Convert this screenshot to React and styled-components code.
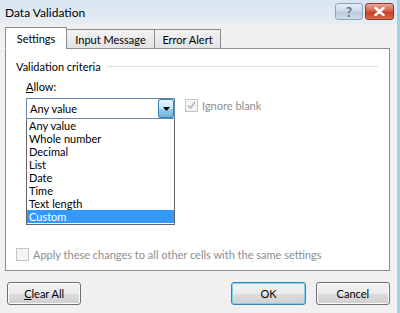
import React from 'react';
import styled, { createGlobalStyle } from 'styled-components';

const Global = createGlobalStyle`
  html, body { margin:0; padding:0; background:#f0f0f0; }
  body { font-family:Lato, "Liberation Sans", sans-serif; font-size:11px; color:#000; }
`;

const Window = styled.div`
  width:400px; height:313px; box-sizing:border-box; overflow:hidden;
  display:flex; flex-direction:column;
  background:#f0f0f0;
  border-right:3px solid #9fd3ea;
`;

const TitleBar = styled.div`
  height:24px; flex:none;
  display:flex; align-items:center; justify-content:space-between;
  padding:0 3px 0 5px;
  background:linear-gradient(#d9e5f1, #e6edf4);
  .title { font-size:12px; }
`;

const Caps = styled.div`
  display:flex; gap:2px; align-self:flex-start; margin-top:3px;
`;

const CapBtn = styled.div`
  width:${p => p.w}px; height:17px; box-sizing:border-box;
  border:1px solid ${p => p.red ? '#8a3a2c' : '#8fa2b8'};
  border-radius:3px;
  background:${p => p.red
    ? 'linear-gradient(#e9a99c, #d0593f 50%, #c3381d 51%, #d86a4b)'
    : 'linear-gradient(#e6eef6, #c9d7e6 50%, #b8c9dc 51%, #cfdceb)'};
  display:flex; align-items:center; justify-content:center;
  color:${p => p.red ? '#fff' : '#5b6f86'};
  font-weight:bold; font-size:13px;
`;

const Client = styled.div`
  flex:1; display:flex; flex-direction:column;
  padding:3px 7px 0 5px;
`;

const Tabs = styled.div`
  display:flex; align-items:flex-end; height:22px; position:relative; z-index:1;
`;

const Tab = styled.div`
  width:${p => p.w}px; height:${p => p.active ? 22 : 20}px; box-sizing:border-box;
  display:flex; align-items:center; justify-content:center;
  border:1px solid #898c95;
  border-bottom:${p => p.active ? '1px solid #fff' : '1px solid #898c95'};
  margin-left:${p => p.first ? 0 : -1}px;
  background:${p => p.active ? '#fff' : 'linear-gradient(#f2f2f2, #e3e3e3)'};
  padding-top:${p => p.active ? 0 : 1}px;
`;

const Panel = styled.div`
  height:223px; box-sizing:border-box; margin-top:-1px;
  border:1px solid #898c95; background:#fff;
  display:flex; flex-direction:column;
  padding:10px 10px 9px 10px;
`;

const GroupHead = styled.div`
  display:flex; align-items:center; gap:6px; line-height:15px;
  &::after { content:''; flex:1; height:1px; background:#d5dfe5; margin-right:1px; }
`;

const Group = styled.div`
  padding:5px 0 0 10px;
  display:flex; flex-direction:column;
`;

const Label = styled.div`
  line-height:16px;
  u { text-decoration:underline; }
`;

const Row = styled.div`
  display:flex; align-items:flex-start; margin-top:3px;
`;

const ComboWrap = styled.div`
  position:relative; width:149px;
`;

const Combo = styled.div`
  height:21px; box-sizing:border-box;
  border:1px solid #6a86a8;
  display:flex; align-items:center; padding-left:3px;
  background:#fff;
`;

const DropBtn = styled.div`
  position:absolute; right:1px; top:1px; width:16px; height:19px; box-sizing:border-box;
  border:1px solid #3c7fb1; border-radius:2px;
  background:linear-gradient(#e5f4fc, #c4e5f6 50%, #98d1ef 51%, #6cb4e0);
  display:flex; align-items:center; justify-content:center;
`;

const List = styled.div`
  position:absolute; left:0; top:21px; width:149px; box-sizing:border-box;
  border:1px solid #646464; border-top:none; background:#fff;
  padding-bottom:1px;
`;

const Item = styled.div`
  height:13px; line-height:13px; padding-left:2px;
  background:${p => p.sel ? '#3399ff' : 'transparent'};
  color:${p => p.sel ? '#fff' : '#000'};
`;

const Check = styled.div`
  display:flex; align-items:center; gap:4px; color:#8d8d8d;
  margin-left:${p => p.ml || 0}px; margin-top:${p => p.mt || 0}px;
  &.bottom { margin-top:auto; }
`;

const Box = styled.div`
  width:13px; height:13px; box-sizing:border-box;
  border:1px solid #c5c5c5; background:#f4f4f4;
  display:flex; align-items:center; justify-content:center;
`;

const Footer = styled.div`
  display:flex; align-items:center; padding:11px 0 0 2px;
`;

const Button = styled.div`
  width:75px; height:23px; box-sizing:border-box;
  border:1px solid ${p => p.def ? '#3c7fb1' : '#707070'};
  border-radius:3px;
  box-shadow:${p => p.def ? 'inset 0 0 0 1px #7ad2f5' : 'inset 0 0 0 1px #fcfcfc'};
  background:linear-gradient(#f2f2f2, #ebebeb 50%, #dddddd 51%, #cfcfcf);
  display:flex; align-items:center; justify-content:center;
  margin-left:${p => p.ml || 0}px;
  u { text-decoration:underline; }
`;

const items = ['Any value', 'Whole number', 'Decimal', 'List', 'Date', 'Time', 'Text length', 'Custom'];

export default function App() {
  return (
    <Window>
      <Global />
      <TitleBar>
        <span className="title">Data Validation</span>
        <Caps>
          <CapBtn w={28}>?</CapBtn>
          <CapBtn w={29} red>
            <svg width="11" height="9" viewBox="0 0 11 9">
              <path d="M1.5 1 L9.5 8 M9.5 1 L1.5 8" stroke="#fff" strokeWidth="2.4" strokeLinecap="round" />
            </svg>
          </CapBtn>
        </Caps>
      </TitleBar>
      <Client>
        <Tabs>
          <Tab active first w={62}>Settings</Tab>
          <Tab w={89}>Input Message</Tab>
          <Tab w={67}>Error Alert</Tab>
        </Tabs>
        <Panel>
          <GroupHead>Validation criteria</GroupHead>
          <Group>
            <Label><u>A</u>llow:</Label>
            <Row>
              <ComboWrap>
                <Combo>Any value</Combo>
                <DropBtn>
                  <svg width="7" height="4" viewBox="0 0 7 4"><path d="M0 0 H7 L3.5 4 Z" fill="#000" /></svg>
                </DropBtn>
                <List>
                  {items.map(t => <Item key={t} sel={t === 'Custom'}>{t}</Item>)}
                </List>
              </ComboWrap>
              <Check ml={10} mt={1}>
                <Box>
                  <svg width="9" height="9" viewBox="0 0 9 9"><path d="M1 4.5 L3.5 7 L8 1" stroke="#b8b8b8" strokeWidth="1.6" fill="none" /></svg>
                </Box>
                <span>Ignore blank</span>
              </Check>
            </Row>
          </Group>
          <Check className="bottom">
            <Box />
            <span>Apply these changes to all other cells with the same settings</span>
          </Check>
        </Panel>
        <Footer>
          <Button><span><u>C</u>lear All</span></Button>
          <Button def ml={150}>OK</Button>
          <Button ml={10}>Cancel</Button>
        </Footer>
      </Client>
    </Window>
  );
}
